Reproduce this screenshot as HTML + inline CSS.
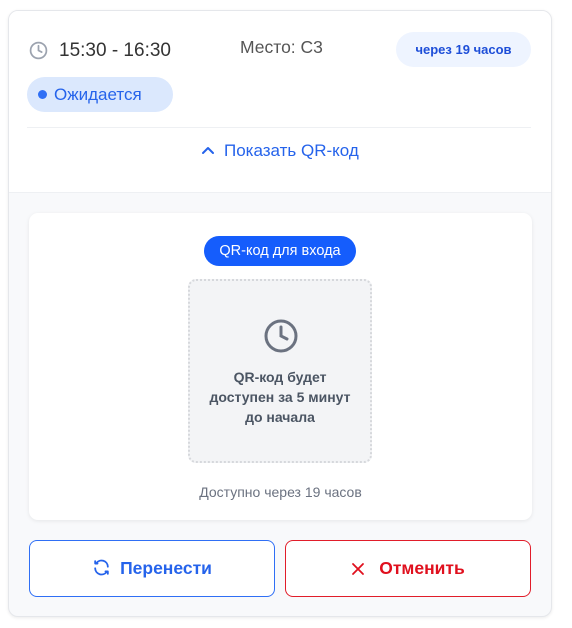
<!DOCTYPE html>
<html><head><meta charset="utf-8"><style>
*{box-sizing:border-box;margin:0;padding:0}
body{width:572px;height:628px;background:#fff;font-family:"Liberation Sans","Noto Sans CJK SC",sans-serif;position:relative;overflow:hidden}
.card{position:absolute;left:8px;top:10px;width:544px;height:607px;border:1px solid #e5e7eb;border-radius:10px;overflow:hidden;background:#f8f9fb;box-shadow:0 1px 3px rgba(0,0,0,.08)}
.top{position:absolute;left:0;top:0;width:100%;height:182px;background:#fff;border-bottom:1px solid #eef0f3}
.abs{position:absolute}
</style></head><body>
<div class="card">
 <div class="top">
  <svg class="abs" style="left:20px;top:30px" width="19" height="19" viewBox="0 0 24 24" fill="none" stroke="#9ca3af" stroke-width="2.2" stroke-linecap="round"><circle cx="12" cy="12" r="10"/><path d="M12 6v6l4 2"/></svg>
  <div class="abs" style="left:50px;top:29px;font-size:19px;color:#333">15:30 - 16:30</div>
  <div class="abs" style="left:231px;top:26px;font-size:17.5px;color:#555">Место: С3</div>
  <div class="abs" style="left:387px;top:21px;width:135px;height:35px;border-radius:18px;background:#eef4ff;color:#1d4ed8;font-size:13px;font-weight:bold;text-align:center;line-height:35px">через 19 часов</div>
  <div class="abs" style="left:18px;top:66px;width:146px;height:35px;border-radius:18px;background:#dbe8fd;color:#2563eb;font-size:17px;line-height:35px;padding-left:27px">Ожидается<span style="position:absolute;left:11px;top:13px;width:9px;height:9px;border-radius:50%;background:#2f6ff5"></span></div>
  <div class="abs" style="left:18px;top:116px;width:504px;height:1px;background:#eef0f3"></div>
  <svg class="abs" style="left:192px;top:135px" width="14" height="10" viewBox="0 0 14 10" fill="none" stroke="#2563eb" stroke-width="2" stroke-linecap="round" stroke-linejoin="round"><path d="M2 7l5-5 5 5"/></svg>
  <div class="abs" style="left:215px;top:130px;font-size:17px;color:#2563eb">Показать QR-код</div>
 </div>
 <div class="abs" style="left:20px;top:202px;width:503px;height:307px;background:#fff;border-radius:9px;box-shadow:0 1px 4px rgba(0,0,0,.08)">
  <div class="abs" style="left:175px;top:23px;width:152px;height:30px;border-radius:15px;background:#155dfc;color:#fff;font-size:14.5px;text-align:center;line-height:30px">QR-код для входа</div>
  <div class="abs" style="left:159px;top:66px;width:184px;height:184px;border:2px dotted #d6d8dc;border-radius:8px;background:#f3f4f6">
   <svg class="abs" style="left:73px;top:37px" width="36" height="36" viewBox="0 0 24 24" fill="none" stroke="#6b7280" stroke-width="2" stroke-linecap="round"><circle cx="12" cy="12" r="10"/><path d="M12 6v6l4 2"/></svg>
   <div class="abs" style="left:0;top:86px;width:180px;text-align:center;font-size:14px;font-weight:bold;color:#4b5563;line-height:20px">QR-код будет<br>доступен за 5 минут<br>до начала</div>
  </div>
  <div class="abs" style="left:0;top:271px;width:503px;text-align:center;font-size:14px;color:#6b7280">Доступно через 19 часов</div>
 </div>
 <div class="abs" style="left:20px;top:529px;width:246px;height:57px;border:1px solid #2f6ff5;border-radius:8px;background:#fff;color:#2563eb;font-size:17.5px;font-weight:bold;line-height:55px;text-align:center">
  <svg style="vertical-align:-3px;margin-right:9px" width="19" height="19" viewBox="0 0 24 24" fill="none" stroke="#2563eb" stroke-width="2.3" stroke-linecap="round" stroke-linejoin="round"><path d="M20 11a8 8 0 0 0-14.5-4.5M4 4v3h3M4 13a8 8 0 0 0 14.5 4.5M20 20v-3h-3"/></svg>Перенести</div>
 <div class="abs" style="left:276px;top:529px;width:246px;height:57px;border:1px solid #e11d2a;border-radius:8px;background:#fff;color:#e0101e;font-size:17.5px;font-weight:bold;line-height:55px;text-align:center">
  <svg style="vertical-align:-2px;margin-right:14px" width="14" height="14" viewBox="0 0 14 14" stroke="#e0101e" stroke-width="1.8" stroke-linecap="round"><path d="M2 2l10 10M12 2L2 12"/></svg>Отменить</div>
</div>
</body></html>
